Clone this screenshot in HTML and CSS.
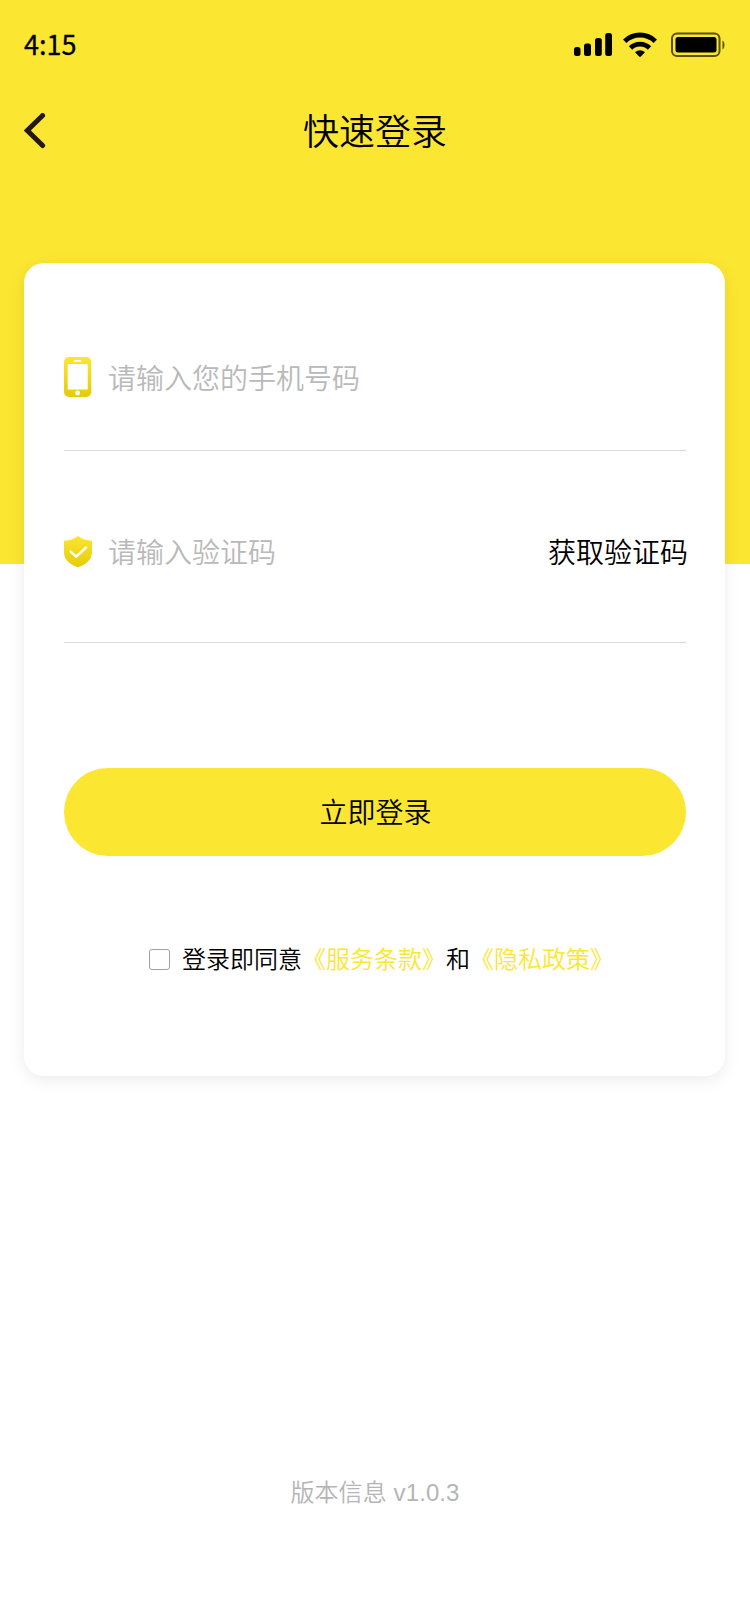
FILE: index.html
```html
<!DOCTYPE html>
<html lang="zh-CN">
  <head>
    <meta charset="UTF-8" />
    <meta name="viewport" content="width=device-width, initial-scale=1.0" />
    <title>快速登录</title>
    <link rel="stylesheet" href="styles.css">
  </head>
  <body>
    <header class="header">
      <div class="status-bar">
        <span class="time">4:15</span>
        <div class="status-icons">
          <svg class="signal" width="38" height="23" viewBox="0 0 38 23">
            <rect x="0" y="14" width="6.500" height="9" rx="2.500" />
            <rect x="10" y="10.500" width="7" height="12.500" rx="2.500" />
            <rect x="21" y="5" width="6.800" height="18" rx="2.500" />
            <rect x="31.200" y="0" width="6.800" height="23" rx="2.500" />
          </svg>
          <svg class="wifi" width="34" height="26" viewBox="0 0 34 26">
            <g fill="none" stroke="#000" stroke-width="4.800">
              <path d="M1.700 9.200a22 22 0 0 1 30.600 0" />
              <path d="M7.500 15.900a13.700 13.700 0 0 1 19 0" />
            </g>
            <path d="M17 25.300l-5-5.100a7.400 7.400 0 0 1 10 0z" />
          </svg>
          <svg class="battery" width="54" height="25" viewBox="0 0 54 25">
            <rect x="1" y="1.500" width="47.500" height="22.500" rx="5" fill="none" stroke="#000" stroke-opacity="0.650" stroke-width="2" />
            <rect x="4.500" y="5" width="41" height="15.500" rx="2.500" />
            <path d="M51.500 8.500v9c2.600-1.500 2.600-7.500 0-9z" fill-opacity="0.650" />
          </svg>
        </div>
      </div>
      <nav class="nav">
        <a class="back" href="#" aria-label="返回">
          <svg width="22" height="36" viewBox="0 0 22 36">
            <path d="M18.600 2.500L3.300 17.500L18.600 32.500" fill="none" stroke="#231815" stroke-width="5" stroke-linecap="round" />
          </svg>
        </a>
        <h1 class="title">快速登录</h1>
      </nav>
    </header>

    <main class="card">
      <form class="login-form">
        <div class="field">
          <svg class="field-icon" width="29" height="40" viewBox="0 0 29 40">
            <defs>
              <linearGradient id="gold" x1="0" y1="0" x2="0" y2="1">
                <stop offset="0" stop-color="#fbe631" />
                <stop offset="1" stop-color="#e5cb0a" />
              </linearGradient>
            </defs>
            <rect x="0" y="0" width="27.300" height="40" rx="5" fill="url(#gold)" />
            <rect x="3.700" y="7" width="20" height="25.500" rx="0.800" fill="#fff" />
            <rect x="9.800" y="3" width="7.700" height="1.800" rx="0.900" fill="#fff" />
            <circle cx="13.600" cy="36" r="2.400" fill="#fff" />
          </svg>
          <input type="tel" placeholder="请输入您的手机号码" />
        </div>
        <div class="field field-code">
          <svg class="field-icon" width="29" height="32" viewBox="0 0 29 32">
            <path d="M14 0Q20 4.600 28 4.700v11.800c0 7-6.500 12.500-14 14.800C6.500 29 0 23.500 0 16.500V4.700q8-.1 14-4.700z" fill="url(#gold)" />
            <path d="M6.700 15.600l5.500 5L22 11.500" fill="none" stroke="#fff" stroke-width="2.500" stroke-linecap="round" stroke-linejoin="round" />
          </svg>
          <input type="text" placeholder="请输入验证码" />
          <button class="get-code" type="button">获取验证码</button>
        </div>
        <button class="submit" type="submit">立即登录</button>
        <div class="agreement">
          <input id="agree" class="checkbox" type="checkbox" />
          <label for="agree">登录即同意<a href="#">《服务条款》</a>和<a href="#">《隐私政策》</a></label>
        </div>
      </form>
    </main>

    <footer class="version">版本信息 v1.0.3</footer>
  </body>
</html>
```
FILE: styles.css
```css
* {
  margin: 0;
  padding: 0;
  box-sizing: border-box;
}
body {
  display: flex;
  flex-direction: column;
  min-height: 1624px;
  font-family: "Noto Sans CJK SC", sans-serif;
  font-weight: 350;
  background: #fff;
  color: #000;
}
svg {
  display: block;
  flex-shrink: 0;
}
a {
  color: #fbe631;
  text-decoration: none;
}
input,
button {
  font-family: inherit;
  font-weight: inherit;
  color: inherit;
  border: none;
  background: none;
  outline: none;
}

/* ------------ Header ------------ */
.header {
  height: 564px;
  background: #fbe631;
}
.status-bar {
  display: flex;
  align-items: center;
  justify-content: space-between;
  height: 89px;
  padding: 0 25px 0 24px;
}
.time {
  padding-bottom: 2px;
  font-size: 27px;
  font-weight: 400;
  line-height: 40px;
  -webkit-text-stroke: 0.3px #000;
}
.status-icons {
  display: flex;
  align-items: center;
}
.wifi {
  margin-left: 11px;
}
.battery {
  margin-left: 14px;
}
.nav {
  display: grid;
  grid-template-columns: 60px 1fr 60px;
  align-items: center;
  height: 84px;
  padding: 0 24px;
}
.title {
  padding-bottom: 4px;
  font-size: 36px;
  font-weight: inherit;
  line-height: 50px;
  text-align: center;
}

/* ------------ Login card ------------ */
.card {
  width: 701px;
  height: 813px;
  margin: -301px 0 0 24px;
  padding: 41px 39px 0 40px;
  border-radius: 20px;
  background: #fff;
  box-shadow: 0 4px 16px rgba(0, 0, 0, 0.08);
}
.field {
  display: flex;
  align-items: center;
  height: 147px;
  border-bottom: 1px solid #d9d9d9;
}
.field-code {
  height: 181px;
  margin-top: 11px;
}
.field input {
  flex: 1;
  min-width: 0;
  height: 42px;
  margin-left: 15px;
  font-size: 28px;
}
.field-code input {
  padding-bottom: 2px;
}
.field input::placeholder {
  color: #b9b9b9;
}
.get-code {
  margin-right: -2px;
  padding-bottom: 2px;
  font-size: 28px;
  line-height: 42px;
}
.submit {
  display: block;
  width: 100%;
  height: 88px;
  margin-top: 125px;
  padding: 0 0 2px 1px;
  border-radius: 44px;
  background: #fbe631;
  font-size: 28px;
}
.agreement {
  display: flex;
  align-items: center;
  margin-top: 84px;
  padding-left: 85px;
  font-size: 24px;
  line-height: 36px;
}
.agreement label {
  padding-bottom: 2px;
}
.checkbox {
  width: 21px;
  height: 21px;
  margin-right: 12px;
  appearance: none;
  border: 1px solid #a0a0a0;
  border-radius: 3px;
}

.version {
  margin-top: 399px;
  font-family: "Liberation Sans", "Noto Sans CJK SC", sans-serif;
  font-size: 24px;
  line-height: 36px;
  letter-spacing: 0.1px;
  text-align: center;
  color: #b5b5b5;
}
```
